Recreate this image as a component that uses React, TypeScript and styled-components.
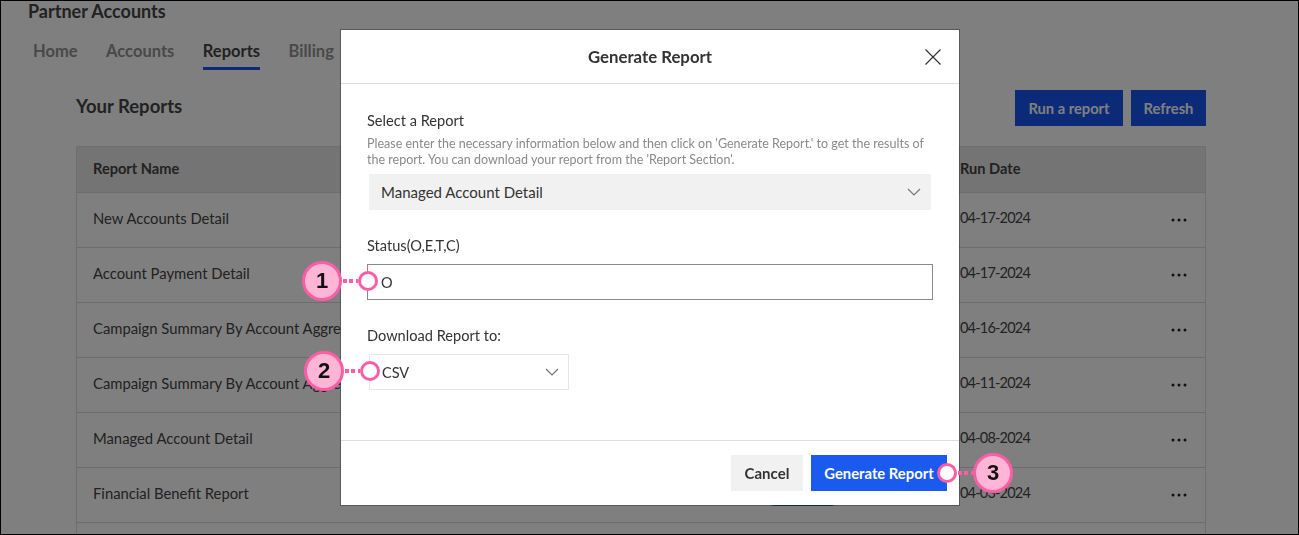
import React, { ReactElement } from "react";
import styled, { createGlobalStyle } from "styled-components";

const FONT = `Lato, "Liberation Sans", sans-serif`;
const PINK = "#fb5ea5";

const REPORTS = [
  { name: "New Accounts Detail", date: "04-17-2024" },
  { name: "Account Payment Detail", date: "04-17-2024" },
  { name: "Campaign Summary By Account Aggregate", date: "04-16-2024" },
  { name: "Campaign Summary By Account Aggregate", date: "04-11-2024" },
  { name: "Managed Account Detail", date: "04-08-2024" },
  { name: "Financial Benefit Report", date: "04-03-2024", pill: true },
  { name: "", date: "" },
];

const Chevron = (): ReactElement => (
  <svg width="14" height="8" viewBox="0 0 14 8" fill="none">
    <path d="M1 1l6 6 6-6" stroke="#777" strokeWidth="1.2" />
  </svg>
);

const Dots = (): ReactElement => (
  <svg width="16" height="4" viewBox="0 0 16 4">
    <circle cx="2" cy="2" r="1.5" fill="#222" />
    <circle cx="8" cy="2" r="1.5" fill="#222" />
    <circle cx="14" cy="2" r="1.5" fill="#222" />
  </svg>
);

const Marker = ({ number }: { number: number }): ReactElement => (
  <LeftMarker>
    <Badge>{number}</Badge>
    <Dash />
    <Ring />
  </LeftMarker>
);

const App = (): ReactElement => {
  return (
    <>
      <GlobalStyle />
      <Page>
        <PageTitle>Partner Accounts</PageTitle>
        <Tabs>
          <Tab>Home</Tab>
          <Tab>Accounts</Tab>
          <Tab $active>Reports</Tab>
          <Tab>Billing</Tab>
        </Tabs>
        <Content>
          <ReportsHeader>
            <SectionTitle>Your Reports</SectionTitle>
            <HeaderActions>
              <PageButton $width={108}>Run a report</PageButton>
              <PageButton $width={75}>Refresh</PageButton>
            </HeaderActions>
          </ReportsHeader>
          <Table>
            <HeadRow>
              <span>Report Name</span>
              <span />
              <span>Run Date</span>
              <span />
            </HeadRow>
            {REPORTS.map((report, i) => (
              <Row key={i}>
                <NameCell>{report.name}</NameCell>
                <span>{report.pill && <StatusPill />}</span>
                <DateCell>{report.date}</DateCell>
                <MoreCell>{report.date && <Dots />}</MoreCell>
              </Row>
            ))}
          </Table>
        </Content>
      </Page>

      <Overlay />

      <Dialog>
        <DialogHeader>
          <DialogTitle>Generate Report</DialogTitle>
          <CloseButton>
            <svg width="16" height="16" viewBox="0 0 16 16" fill="none">
              <path d="M.5.5l15 15M15.5.5l-15 15" stroke="#333" strokeWidth="1.2" />
            </svg>
          </CloseButton>
        </DialogHeader>
        <DialogBody>
          <FieldLabel>Select a Report</FieldLabel>
          <HelpText>
            <HelpLine>
              Please enter the necessary information below and then click on 'Generate Report.' to
              get the results of
            </HelpLine>
            <HelpLine>the report. You can download your report from the 'Report Section'.</HelpLine>
          </HelpText>
          <ReportSelect>
            <span>Managed Account Detail</span>
            <Chevron />
          </ReportSelect>
          <StatusLabel>Status(O,E,T,C)</StatusLabel>
          <TextInput>
            O
            <Marker number={1} />
          </TextInput>
          <DownloadLabel>Download Report to:</DownloadLabel>
          <FormatSelect>
            <span>CSV</span>
            <Chevron />
            <Marker number={2} />
          </FormatSelect>
        </DialogBody>
        <DialogFooter>
          <CancelButton>Cancel</CancelButton>
          <GenerateButton>
            Generate Report
            <RightMarker>
              <Ring />
              <Dash />
              <Badge>3</Badge>
            </RightMarker>
          </GenerateButton>
        </DialogFooter>
      </Dialog>
    </>
  );
};

const GlobalStyle = createGlobalStyle`
  html, body {
    margin: 0;
    height: 100%;
    overflow: hidden;
    background: #fff;
    font-family: ${FONT};
    color: #333;
  }
  * { box-sizing: border-box; }
`;

const Page = styled.div`
  height: 535px;
  overflow: hidden;
  padding: 2px 0 0 28px;
`;

const PageTitle = styled.div`
  font-size: 18px;
  line-height: 19px;
  font-weight: 700;
  color: #444;
`;

const Tabs = styled.div`
  display: flex;
  gap: 28.5px;
  margin: 20px 0 0 5px;
`;

const Tab = styled.div<{ $active?: boolean }>`
  font-size: 16.5px;
  line-height: 20px;
  height: 29px;
  font-weight: 700;
  color: ${({ $active }) => ($active ? "#444" : "#929292")};
  border-bottom: 3px solid ${({ $active }) => ($active ? "#1757f0" : "transparent")};
`;

const Content = styled.div`
  margin: 20px 93px 0 48px;
`;

const ReportsHeader = styled.div`
  display: flex;
  justify-content: space-between;
  align-items: flex-start;
`;

const SectionTitle = styled.div`
  font-size: 18.5px;
  line-height: 32px;
  font-weight: 700;
  color: #444;
`;

const HeaderActions = styled.div`
  display: flex;
  gap: 8px;
`;

const PageButton = styled.div<{ $width: number }>`
  width: ${({ $width }) => $width}px;
  height: 36px;
  display: flex;
  align-items: center;
  justify-content: center;
  background: #1757f0;
  color: #fff;
  font-size: 14.7px;
  font-weight: 700;
`;

const Table = styled.div`
  margin-top: 20px;
  border: 1px solid #dcdcdc;
`;

const COLUMNS = "grid-template-columns: 667px 200px 193px 1fr;";

const HeadRow = styled.div`
  display: grid;
  ${COLUMNS}
  align-items: center;
  height: 45px;
  padding: 0 0 2px 16px;
  background: #e9e9e9;
  font-size: 14.6px;
  font-weight: 700;
  color: #444;
`;

const Row = styled.div`
  display: grid;
  ${COLUMNS}
  align-items: center;
  height: 55px;
  padding: 0 0 5px 16px;
  border-top: 1px solid #d8d8d8;
  font-size: 14.8px;
  color: #444;
`;

const NameCell = styled.span`
  white-space: nowrap;
`;

const DateCell = styled.span`
  font-size: 14.5px;
  letter-spacing: -0.8px;
`;

const StatusPill = styled.div`
  width: 81px;
  height: 26px;
  margin-left: 2px;
  border-radius: 13px;
  background: #0d8f8f;
`;

const MoreCell = styled.div`
  display: flex;
  justify-content: center;
  padding-top: 5px;
`;

const Overlay = styled.div`
  position: fixed;
  inset: 0;
  background: rgba(0, 0, 0, 0.5);
  border: 1px solid #000;
`;

const Dialog = styled.div`
  position: fixed;
  top: 30px;
  left: 341px;
  width: 618px;
  height: 475px;
  background: #fff;
  box-shadow: 0 0 0 1px rgba(0, 0, 0, 0.3);
  display: flex;
  flex-direction: column;
`;

const DialogHeader = styled.div`
  position: relative;
  height: 54px;
  flex: none;
  display: flex;
  align-items: center;
  justify-content: center;
  border-bottom: 1px solid #dedede;
`;

const DialogTitle = styled.div`
  font-size: 16.8px;
  font-weight: 700;
  color: #333;
`;

const CloseButton = styled.div`
  position: absolute;
  top: 19px;
  right: 18px;
  display: flex;
`;

const DialogBody = styled.div`
  flex: 1;
  padding: 28px 26px 0;
`;

const FieldLabel = styled.div`
  font-size: 14.6px;
  line-height: 18px;
  color: #333;
`;

const HelpText = styled.div`
  font-size: 12.5px;
  line-height: 16px;
  color: #8a8a8a;
  margin-top: 6px;
`;

const HelpLine = styled.div`
  white-space: nowrap;
`;

const selectCss = `
  position: relative;
  margin-left: 2px;
  display: flex;
  align-items: center;
  justify-content: space-between;
  height: 36px;
  font-size: 15px;
  color: #333;
`;

const ReportSelect = styled.div`
  ${selectCss}
  width: 562px;
  margin-top: 6px;
  padding: 0 10px 0 12px;
  background: #f1f1f1;
`;

const StatusLabel = styled(FieldLabel)`
  margin-top: 27px;
`;

const TextInput = styled.div`
  position: relative;
  width: 566px;
  height: 36px;
  margin-top: 9px;
  padding-left: 13px;
  display: flex;
  align-items: center;
  border: 1px solid #8a8a8a;
  font-size: 14.5px;
  color: #333;
`;

const DownloadLabel = styled(FieldLabel)`
  margin-top: 27px;
`;

const FormatSelect = styled.div`
  ${selectCss}
  width: 200px;
  margin-top: 9px;
  padding: 0 9px 0 12px;
  border: 1px solid #e6e6e6;
  font-size: 14.5px;
`;

const DialogFooter = styled.div`
  height: 65px;
  flex: none;
  display: flex;
  justify-content: flex-end;
  gap: 8px;
  padding: 14px 12px 0 0;
  border-top: 1px solid #dedede;
`;

const footerButtonCss = `
  height: 36px;
  display: flex;
  align-items: center;
  justify-content: center;
  padding-bottom: 1px;
  font-weight: 700;
`;

const CancelButton = styled.div`
  ${footerButtonCss}
  width: 72px;
  background: #f1f1f1;
  color: #333;
  font-size: 15px;
`;

const GenerateButton = styled.div`
  ${footerButtonCss}
  position: relative;
  width: 136px;
  background: #1a5aee;
  color: #fff;
  font-size: 14.8px;
`;

const LeftMarker = styled.div`
  position: absolute;
  top: 50%;
  right: 100%;
  margin: -1px -10px 0 0;
  transform: translateY(-50%);
  display: flex;
  align-items: center;
`;

const RightMarker = styled.div`
  position: absolute;
  top: 50%;
  left: 100%;
  margin-left: -10px;
  transform: translateY(-50%);
  display: flex;
  align-items: center;
`;

const Badge = styled.div`
  width: 40px;
  height: 40px;
  flex: none;
  border-radius: 50%;
  border: 3px solid ${PINK};
  background: #feb5d6;
  color: #111;
  font-family: "Liberation Sans", sans-serif;
  font-size: 22px;
  font-weight: 700;
  display: flex;
  align-items: center;
  justify-content: center;
`;

const Ring = styled.div`
  width: 20px;
  height: 20px;
  flex: none;
  border-radius: 50%;
  border: 3px solid ${PINK};
  background: #fff;
`;

const Dash = styled.div`
  width: 16px;
  height: 4px;
  flex: none;
  background: repeating-linear-gradient(90deg, transparent 0 1px, ${PINK} 1px 5px, transparent 5px 6.5px);
`;

export default App;
